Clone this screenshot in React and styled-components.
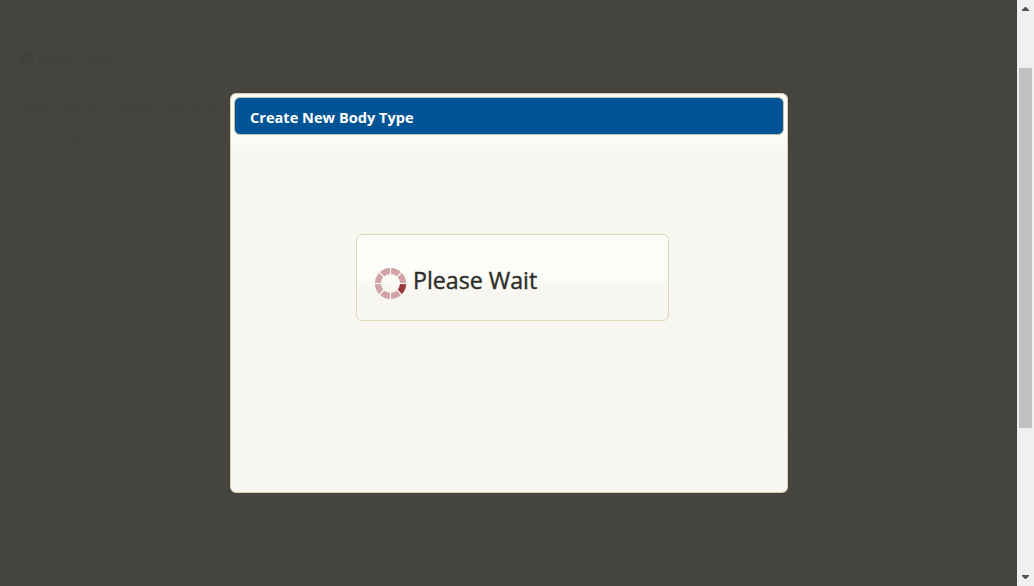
import React from "react";
import styled, { createGlobalStyle } from "styled-components";

const Global = createGlobalStyle`
  * { box-sizing: border-box; }
  body { margin: 0; overflow: hidden; background: #46443f; font-family: "Open Sans", "Noto Sans", sans-serif; }
`;

const Screen = styled.div`
  position: relative;
  display: flex;
  width: 1034px;
  height: 586px;
  overflow: hidden;
`;

const Page = styled.main`
  width: 1017px;
  height: 586px;
  padding: 0 4px;
  background: #46443f;
  color: #43413c;
  font-size: 13.4px;
  overflow: hidden;
`;

const Tabs = styled.nav`
  display: flex;
  height: 25px;
`;

const Tab = styled.div`
  display: flex;
  justify-content: center;
  gap: 11px;
  width: ${(p) => p.$width}px;
  height: 25px;
  line-height: 18px;
  background: ${(p) => (p.$active ? "#43443e" : "transparent")};
  color: ${(p) => (p.$active ? "#474640" : "#43413c")};
`;

const Panel = styled.section`
  height: 561px;
  padding: 16px 10px 0 9px;
  border: 4px solid #44443e;
  border-bottom: 0;
`;

const Heading = styled.div`
  display: flex;
  align-items: center;
  gap: 5px;
  height: 28px;
  padding-left: 3px;
  font-size: 16px;
`;

const Collapse = styled.div`
  display: flex;
  align-items: center;
  width: 13px;
  height: 12px;
  padding: 0 3px;
  border-radius: 2px;
  background: #42403b;
  &::after { content: ""; width: 7px; height: 2px; background: #46443f; }
`;

const GroupHint = styled.div`
  height: 45px;
  padding: 21px 0 0 1px;
  font-size: 13.7px;
  line-height: 24px;
  white-space: nowrap;
`;

const Grid = styled.div`
  display: flex;
  height: 373px;
`;

const Rows = styled.div`
  width: 700px;
  padding-top: 6px;
`;

const Row = styled.div`
  display: flex;
  align-items: center;
  gap: 19px;
  height: ${(p) => (p.$tall ? 121 : 33)}px;
  padding-left: 5px;
  line-height: 22px;
  color: ${(p) => (p.$head ? "#43413c" : "#45433e")};
`;

const Box = styled.span`
  width: 12px;
  height: 12px;
  margin-top: ${(p) => (p.$low ? 60 : 0)}px;
  border: 1px solid #45433e;
`;

const CellText = styled.span`
  white-space: pre-line;
`;

const Description = styled.div`
  display: flex;
  align-self: flex-end;
  justify-content: flex-end;
  width: 267px;
  height: 44px;
  margin-bottom: 20px;
  line-height: 22px;
  color: #44423d;
  white-space: pre;
  overflow: hidden;
`;

const GridScroll = styled.div`
  width: 12px;
  height: 207px;
  margin: 57px 0 0 4px;
  background: #45433e;
`;

const Pager = styled.div`
  display: flex;
  align-items: center;
  height: 54px;
  padding: 0 0 0 13px;
  color: #44423d;
`;

const PagerItem = styled.span`
  flex: none;
  width: ${(p) => p.$width}px;
  text-align: ${(p) => p.$align || "left"};
`;

const PageNumber = styled.span`
  flex: none;
  width: 31px;
  height: 31px;
  border-radius: 50%;
  background: #43443e;
  color: #464540;
  line-height: 31px;
  text-align: center;
`;

const Actions = styled.div`
  display: flex;
  gap: 4px;
  padding: 7px 0 0;
  margin-left: -4px;
`;

const Action = styled.div`
  width: 106px;
  height: 36px;
  border-radius: 3px;
  background: #43443e;
  color: #464540;
  line-height: 34px;
  text-align: center;
`;

const ScrollTrack = styled.aside`
  display: flex;
  flex-direction: column;
  align-items: center;
  justify-content: space-between;
  width: 17px;
  height: 586px;
  padding: 7px 0;
  background: #f0f0f0;
`;

const Thumb = styled.div`
  width: 13px;
  height: 360px;
  margin: 57px 0 147px;
  background: #c1c1c1;
`;

const Arrow = styled.svg`
  display: block;
  flex: none;
  width: 7px;
  height: 4px;
  fill: #505050;
`;

const Dialog = styled.div`
  position: absolute;
  left: 230px;
  top: 93px;
  width: 558px;
  height: 400px;
  padding: 3px;
  border: 1px solid #d9cfae;
  border-radius: 6px;
  background: linear-gradient(#fdfef9 0, #fdfef9 42px, #f7f6f1 60px, #f7f6f1 100%);
`;

const Title = styled.header`
  height: 38px;
  padding-left: 15px;
  border: 1px solid #c9c3a7;
  border-radius: 6px;
  background: #005496;
  color: #fff;
  font-size: 14.6px;
  font-weight: 700;
  line-height: 38px;
  white-space: nowrap;
`;

const DialogBody = styled.div`
  padding: 99px 0 0 122px;
`;

const Loading = styled.div`
  display: flex;
  align-items: center;
  gap: 6px;
  width: 313px;
  height: 87px;
  padding: 12px 0 0 18px;
  border: 1px solid #ddd8b9;
  border-radius: 6px;
  background: linear-gradient(#fdfef9 0, #fdfef9 49%, #f7f6f1 66%, #f7f6f1 100%);
`;

const Spinner = styled.svg`
  display: block;
  width: 32px;
  height: 32px;
`;

const Message = styled.div`
  margin-top: -7px;
  color: #2e2e29;
  font-size: 23.2px;
  line-height: 32px;
  -webkit-text-stroke: 0.4px #2e2e29;
  white-space: nowrap;
`;

const angles = [0, 45, 90, 135, 180, 225, 270, 315];

function LoadingIcon() {
  return (
    <Spinner viewBox="0 0 32 32">
      <circle cx="15.5" cy="15.5" r="12.6" fill="none" stroke="#d1a3a6" strokeWidth="6" />
      <path d="M28.1 15.5A12.6 12.6 0 0 1 24.41 24.41" fill="none" stroke="#9d373c" strokeWidth="6" />
      {angles.map((a) => (
        <path key={a} d="M15.5 0V7" stroke="#fcfcf7" strokeWidth="1.2" transform={`rotate(${a} 15.5 15.5)`} />
      ))}
    </Spinner>
  );
}

const rows = ["", "1", "Body", "Body", "Body 3", "Body 2"];

export default function App() {
  return (
    <>
      <Global />
      <Screen>
        <Page>
          <Tabs>
            <Tab $width={65}>Home</Tab>
            <Tab $width={111} $active><span>Body Type</span><b>×</b></Tab>
          </Tabs>
          <Panel>
            <Heading><Collapse />Body Type</Heading>
            <GroupHint>Drag a column header and drop it</GroupHint>
            <Grid>
              <Rows>
                <Row $head><Box /><CellText>Body Type</CellText></Row>
                {rows.map((text, i) => (
                  <Row key={i}><Box /><CellText>{text}</CellText></Row>
                ))}
                <Row $tall>
                  <Box $low />
                  <CellText>{"Lorem ipsum dolor sit amet,\nconsectetuer adipiscing\ncommodo ligula eget dolor.\nmassa. Cum sociis natoq\net magnis dis parturient"}</CellText>
                </Row>
              </Rows>
              <Description>{"gula eget dolor. Aenean massa. C\nricies nec, pellentesque eu, preti"}</Description>
              <GridScroll />
            </Grid>
            <Pager>
              <PagerItem $width={34}>«</PagerItem>
              <PagerItem $width={19}>‹</PagerItem>
              <PageNumber>1</PageNumber>
              <PagerItem $width={74} $align="center">Page</PagerItem>
              <PagerItem $width={37}>1</PagerItem>
              <PagerItem $width={57}>of 1</PagerItem>
              <PagerItem $width={32}>›</PagerItem>
              <PagerItem $width={543}>»</PagerItem>
              <PagerItem $width={120}>1 - 9 of 9 items</PagerItem>
              <PagerItem $width={14}>↻</PagerItem>
            </Pager>
            <Actions>
              <Action>Add</Action>
              <Action>Delete</Action>
              <Action>Toggle</Action>
            </Actions>
          </Panel>
        </Page>
        <ScrollTrack>
          <Arrow viewBox="0 0 7 4"><path d="M3 0H4L7 3V4H0V3Z" /></Arrow>
          <Thumb />
          <Arrow viewBox="0 0 7 4"><path d="M0 0H7V1L4 4H3L0 1Z" /></Arrow>
        </ScrollTrack>
        <Dialog>
          <Title>Create New Body Type</Title>
          <DialogBody>
            <Loading><LoadingIcon /><Message>Please Wait</Message></Loading>
          </DialogBody>
        </Dialog>
      </Screen>
    </>
  );
}
